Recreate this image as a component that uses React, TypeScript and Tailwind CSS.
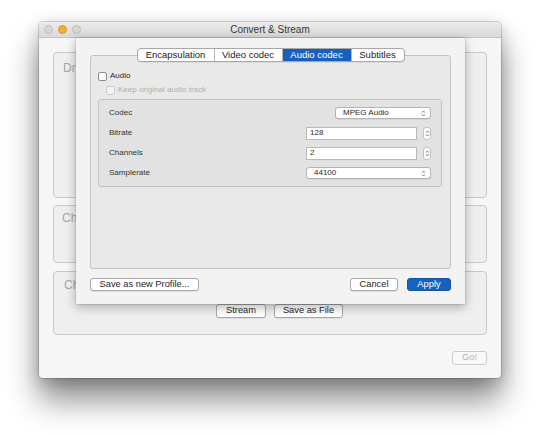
const font = { fontFamily: '"Liberation Sans", Arial, sans-serif' };

function UpDown({ className = "" }: { className?: string }) {
  return (
    <svg width="5" height="7" viewBox="0 0 5 7" className={className}>
      <path d="M1 2.6 L2.5 1 L4 2.6" fill="none" stroke="#6b6b6b" strokeWidth="0.9" />
      <path d="M1 4.4 L2.5 6 L4 4.4" fill="none" stroke="#6b6b6b" strokeWidth="0.9" />
    </svg>
  );
}

function Popup({ label, width }: { label: string; width: string }) {
  return (
    <div
      className={`${width} h-[12px] flex items-center justify-between pl-[7px] pr-[4px] bg-white border border-[#b4b4b4] rounded-[3px] shadow-[0_0.5px_0.5px_rgba(0,0,0,0.12)] text-[8px] leading-none text-[#2a2a2a]`}
    >
      <span>{label}</span>
      <UpDown />
    </div>
  );
}

function Field({ value }: { value: string }) {
  return (
    <div className="flex items-center gap-[6px]">
      <div className="w-[111px] h-[13px] flex items-center pl-[3px] bg-white border border-[#b9b9b9] text-[8px] leading-none text-[#2a2a2a]">
        {value}
      </div>
      <div className="w-[8px] h-[13px] flex items-center justify-center bg-white border border-[#c2c2c2] rounded-[3px]">
        <UpDown />
      </div>
    </div>
  );
}

function Row({ label, children }: { label: string; children: React.ReactNode }) {
  return (
    <div className="h-[20px] flex items-center justify-between">
      <span className="text-[8px] leading-none text-[#333]">{label}</span>
      {children}
    </div>
  );
}

function Button({ label, width, primary = false }: { label: string; width: string; primary?: boolean }) {
  return (
    <div
      className={`${width} h-[13px] flex items-center justify-center rounded-[3px] text-[9.3px] leading-none ${
        primary
          ? "bg-[#1862bf] text-white border border-[#1452a3]"
          : "bg-white text-[#262626] border border-[#a9a9a9] shadow-[0_0.5px_0.5px_rgba(0,0,0,0.15)]"
      }`}
    >
      {label}
    </div>
  );
}

const tabs = [
  { label: "Encapsulation", w: "w-[76px]" },
  { label: "Video codec", w: "w-[68px]" },
  { label: "Audio codec", w: "w-[69px]" },
  { label: "Subtitles", w: "w-[53px]" },
];

export default function App() {
  return (
    <div className="w-[540px] h-[435px] bg-white overflow-hidden pt-[22px] pl-[39px]" style={font}>
      {/* Window */}
      <div className="relative w-[462px] h-[356px] rounded-[4px] bg-[#f6f6f6] shadow-[0_22px_32px_rgba(0,0,0,0.45),0_4px_16px_rgba(0,0,0,0.2),0_0_0_1px_rgba(0,0,0,0.15)]">
        {/* Title bar */}
        <div className="h-[16px] grid grid-cols-[1fr_auto_1fr] items-center rounded-t-[4px] bg-gradient-to-b from-[#ebebeb] to-[#d9d9d9] border-b border-[#c3c3c3]">
          <div className="flex items-center gap-[5px] pl-[5px]">
            <span className="w-[9px] h-[9px] rounded-full bg-[#d6d6d6] border border-[#c0c0c0]" />
            <span className="w-[9px] h-[9px] rounded-full bg-[#f4ad32] border border-[#dc9a25]" />
            <span className="w-[9px] h-[9px] rounded-full bg-[#d6d6d6] border border-[#c0c0c0]" />
          </div>
          <span className="text-[10px] leading-none text-[#363636]">Convert &amp; Stream</span>
          <div />
        </div>

        {/* Window content (mostly hidden behind the sheet) */}
        <div className="px-[14px] pt-[14px]">
          <div className="h-[146px] rounded-[4px] border border-[#c8c8c8] bg-[#efefef] pl-[9px] pt-[8px]">
            <span className="block text-[12px] leading-[14px] text-[#a6a6a6]">Drop media here</span>
          </div>
          <div className="mt-[7px] h-[58px] rounded-[4px] border border-[#c8c8c8] bg-[#efefef] pl-[8px] pt-[5px]">
            <span className="block text-[12px] leading-[14px] text-[#a6a6a6]">Choose Stream Type</span>
          </div>
          <div className="mt-[8px] h-[64px] rounded-[4px] border border-[#c8c8c8] bg-[#efefef] pl-[10px] pt-[6px]">
            <span className="block text-[12px] leading-[14px] text-[#a6a6a6]">Choose Destination</span>
            <div className="mt-[12px] pl-[152px] flex gap-[8px]">
              <Button label="Stream" width="w-[50px] h-[14px]" />
              <Button label="Save as File" width="w-[69px] h-[14px]" />
            </div>
          </div>
          <div className="mt-[16px] flex justify-end">
            <div className="w-[35px] h-[14px] flex items-center justify-center rounded-[3px] border border-[#cbcbcb] bg-[#f9f9f9] text-[9.3px] leading-none text-[#b3b3b3]">
              Go!
            </div>
          </div>
        </div>

        {/* Sheet */}
        <div className="absolute left-[37px] top-[16px] w-[389px] h-[266px] bg-[#f3f3f3] shadow-[0_3px_10px_rgba(0,0,0,0.3),0_0_0_1px_rgba(0,0,0,0.08)] px-[14px] pt-[10px]">
          <div className="relative z-10 flex justify-center">
            <div className="flex h-[14px] rounded-[4px] border border-[#a8a8a8] bg-white overflow-hidden shadow-[0_0.5px_0.5px_rgba(0,0,0,0.12)]">
              {tabs.map((t, i) => (
                <div
                  key={t.label}
                  className={`${t.w} flex items-center justify-center text-[9.5px] leading-none ${
                    i === 2 ? "bg-[#1761bd] text-white" : "text-[#222]"
                  } ${i > 0 ? "border-l border-[#b5b5b5]" : ""}`}
                >
                  {t.label}
                </div>
              ))}
            </div>
          </div>

          {/* Tab panel */}
          <div className="-mt-[7px] h-[214px] rounded-[3px] border border-[#c3c3c3] bg-[#e9e9e9] pl-[7px] pr-[8px] pt-[15px]">
            <div className="h-[10px] flex items-center gap-[3px]">
              <span className="w-[9px] h-[9px] rounded-[2px] border border-[#8e8e8e] bg-white" />
              <span className="text-[8px] leading-none text-[#262626]">Audio</span>
            </div>
            <div className="mt-[4px] h-[10px] flex items-center gap-[3px] pl-[8px]">
              <span className="w-[9px] h-[9px] rounded-[2px] border border-[#cdcdcd] bg-[#f4f4f4]" />
              <span className="text-[8px] leading-none text-[#b0b0b0]">Keep original audio track</span>
            </div>

            <div className="mt-[4px] h-[88px] rounded-[3px] border border-[#c2c2c2] bg-[#e2e2e2] px-[10px] pt-[3px]">
              <Row label="Codec">
                <Popup label="MPEG Audio" width="w-[96px]" />
              </Row>
              <Row label="Bitrate">
                <Field value="128" />
              </Row>
              <Row label="Channels">
                <Field value="2" />
              </Row>
              <Row label="Samplerate">
                <Popup label="44100" width="w-[125px]" />
              </Row>
            </div>
          </div>

          {/* Sheet buttons */}
          <div className="mt-[9px] flex items-center justify-between">
            <Button label="Save as new Profile..." width="w-[109px]" />
            <div className="flex gap-[9px]">
              <Button label="Cancel" width="w-[48px]" />
              <Button label="Apply" width="w-[44px]" primary />
            </div>
          </div>
        </div>
      </div>
    </div>
  );
}
